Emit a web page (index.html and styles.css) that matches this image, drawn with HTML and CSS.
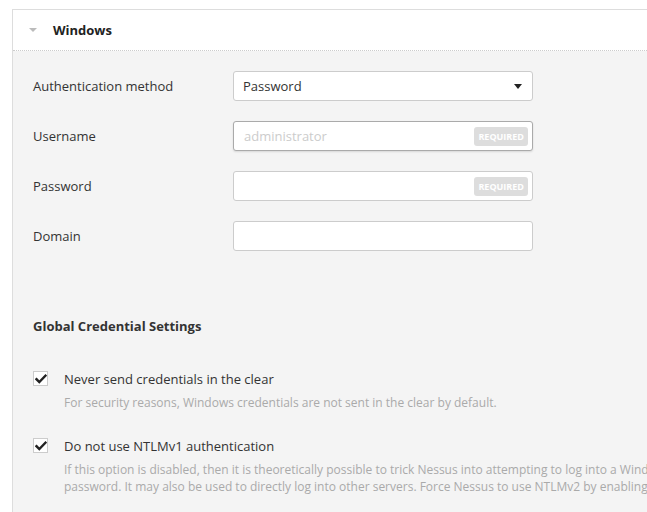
FILE: index.html
```html
<!DOCTYPE html>
<html>
<head>
<meta charset="utf-8">
<link rel="stylesheet" href="styles.css">
</head>
<body>
<div class="panel">
  <div class="panel-header">
    <span class="caret"></span>
    <span class="title">Windows</span>
  </div>
  <div class="panel-body">
    <div class="form">
      <div class="row">
        <label class="label">Authentication method</label>
        <div class="select">
          <span>Password</span>
          <span class="select-caret"></span>
        </div>
      </div>
      <div class="row">
        <label class="label">Username</label>
        <div class="input focused">
          <span class="placeholder">administrator</span>
          <span class="badge">Required</span>
        </div>
      </div>
      <div class="row">
        <label class="label">Password</label>
        <div class="input">
          <span class="placeholder"></span>
          <span class="badge">Required</span>
        </div>
      </div>
      <div class="row">
        <label class="label">Domain</label>
        <div class="input"></div>
      </div>
    </div>

    <h3 class="section-title">Global Credential Settings</h3>

    <div class="check-item">
      <span class="checkbox">
        <svg viewBox="0 0 12 12" width="12" height="12"><path d="M1.5 6.2 L4.3 9 L10.5 2.6" fill="none" stroke="#222" stroke-width="2.4" stroke-linecap="square"/></svg>
      </span>
      <div class="check-text">
        <div class="check-label">Never send credentials in the clear</div>
        <div class="help">For security reasons, Windows credentials are not sent in the clear by default.</div>
      </div>
    </div>

    <div class="check-item">
      <span class="checkbox">
        <svg viewBox="0 0 12 12" width="12" height="12"><path d="M1.5 6.2 L4.3 9 L10.5 2.6" fill="none" stroke="#222" stroke-width="2.4" stroke-linecap="square"/></svg>
      </span>
      <div class="check-text">
        <div class="check-label">Do not use NTLMv1 authentication</div>
        <div class="help"><span class="line">If this option is disabled, then it is theoretically possible to trick Nessus into attempting to log into a Windows server with domain credentials via the NTLM version 1 protocol. This provides the remote attacker with the ability to use a hash obtained from Nessus. This hash can be potentially cracked to reveal a username or</span><span class="line">password. It may also be used to directly log into other servers. Force Nessus to use NTLMv2 by enabling the Only use NTLMv2 setting at scan time.</span></div>
      </div>
    </div>
  </div>
</div>
</body>
</html>
```

FILE: styles.css
```css
html, body {
  margin: 0;
  padding: 0;
  background: #ffffff;
  overflow: hidden;
  width: 647px;
  height: 512px;
}

body {
  font-family: "Open Sans", "Liberation Sans", sans-serif;
  color: #333333;
}

.panel {
  margin: 9px 0 0 12px;
  border-left: 1px solid #dddddd;
  border-top: 1px solid #dddddd;
  width: 900px;
}

.panel-header {
  height: 40px;
  background: #ffffff;
  border-bottom: 1px dotted #cccccc;
  display: flex;
  align-items: center;
}

.caret {
  width: 0;
  height: 0;
  margin-left: 16px;
  border-left: 4px solid transparent;
  border-right: 4px solid transparent;
  border-top: 4px solid #bbbbbb;
}

.title {
  margin-left: 16px;
  font-size: 13px;
  font-weight: 700;
  color: #222222;
}

.panel-body {
  background: #f4f4f4;
  padding: 20px 0 30px 20px;
}

.form {
  display: flex;
  flex-direction: column;
  gap: 20px;
}

.row {
  display: flex;
  align-items: center;
  height: 30px;
}

.label {
  width: 200px;
  font-size: 13px;
  color: #333333;
}

.select, .input {
  box-sizing: border-box;
  width: 300px;
  height: 30px;
  background: #ffffff;
  border: 1px solid #cccccc;
  border-radius: 3px;
  display: flex;
  align-items: center;
  justify-content: space-between;
}

.select {
  padding: 0 10px 0 9px;
  font-size: 13px;
  color: #333333;
}

.select-caret {
  width: 0;
  height: 0;
  border-left: 4px solid transparent;
  border-right: 4px solid transparent;
  border-top: 5px solid #222222;
}

.input {
  padding: 0 4px 0 10px;
}

.input.focused {
  border-color: #aaaaaa;
  box-shadow: 0 1px 2px rgba(0,0,0,0.12);
}

.placeholder {
  font-size: 13px;
  color: #cccccc;
}

.badge {
  background: #dddddd;
  color: #ffffff;
  font-size: 9px;
  font-weight: 700;
  text-transform: uppercase;
  border-radius: 3px;
  padding: 3px 4px;
  line-height: 13px;
}

.section-title {
  margin: 66px 0 0 0;
  font-size: 13px;
  font-weight: 700;
  color: #333333;
  line-height: 18px;
}

.check-item {
  display: flex;
  align-items: flex-start;
  margin-top: 35px;
}

.check-item + .check-item {
  margin-top: 26px;
}

.checkbox {
  box-sizing: border-box;
  width: 15px;
  height: 15px;
  border: 1px solid #cccccc;
  background: #ffffff;
  display: flex;
  align-items: center;
  justify-content: center;
  margin-top: 1px;
  flex: none;
}

.check-text {
  margin-left: 16px;
}

.check-label {
  font-size: 13px;
  color: #333333;
  line-height: 18px;
}

.help {
  margin-top: 6px;
  font-size: 12px;
  color: #aaaaaa;
  line-height: 17px;
}

.help .line {
  display: block;
  white-space: nowrap;
}
```
